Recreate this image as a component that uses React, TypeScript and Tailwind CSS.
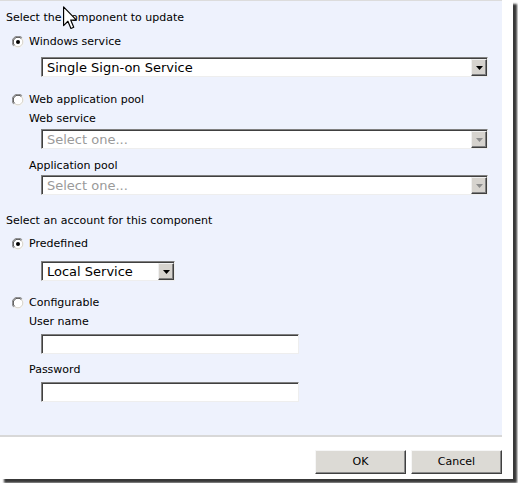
import React from 'react';

const label = "font-['DejaVu_Sans',sans-serif] text-[11px] leading-[14px] text-black";

function Radio({ checked }: { checked?: boolean }) {
  return (
    <svg width="12" height="12" viewBox="0 0 12 12" className="shrink-0">
      <circle cx="6" cy="6" r="5.5" fill="#ffffff" />
      <path d="M1.8 10.2 A5.5 5.5 0 0 1 10.2 1.8" fill="none" stroke="#808080" strokeWidth="1" />
      <path d="M2.6 9.4 A4.5 4.5 0 0 1 9.4 2.6" fill="none" stroke="#404040" strokeWidth="1" />
      <path d="M10.2 1.8 A5.5 5.5 0 0 1 1.8 10.2" fill="none" stroke="#f4f4f4" strokeWidth="1" />
      <path d="M9.4 2.6 A4.5 4.5 0 0 1 2.6 9.4" fill="none" stroke="#d4d0c8" strokeWidth="1" />
      {checked && <circle cx="6" cy="6" r="2" fill="#000000" />}
    </svg>
  );
}

function RadioRow({ text, checked, className }: { text: string; checked?: boolean; className: string }) {
  return (
    <div className={`flex items-center h-[14px] pl-[12px] gap-[5px] ${className}`}>
      <Radio checked={checked} />
      <span className={label}>{text}</span>
    </div>
  );
}

function Dropdown({
  value,
  disabled,
  width,
  className,
}: {
  value: string;
  disabled?: boolean;
  width: string;
  className: string;
}) {
  return (
    <div
      className={`${width} h-[20px] ml-[41px] flex bg-white border border-t-[#808080] border-l-[#808080] border-b-[#eeeeee] border-r-[#eeeeee] shadow-[inset_1px_1px_0_#404040] ${className}`}
    >
      <div
        className={`flex-1 flex items-center pl-[5px] pt-[1px] font-['DejaVu_Sans',sans-serif] text-[13px] leading-none ${
          disabled ? 'text-[#9a9a9a]' : 'text-black'
        }`}
      >
        {value}
      </div>
      <div className="w-[16px] h-[17px] mt-[1px] flex items-center justify-center bg-[#d6d3ce] border border-t-[#f0f0f0] border-l-[#f0f0f0] border-b-[#404040] border-r-[#404040] shadow-[inset_-1px_-1px_0_#808080]">
        <svg width="7" height="4" viewBox="0 0 7 4">
          <path d="M0 0 H7 L3.5 4 Z" fill={disabled ? '#8c8c8c' : '#000000'} />
        </svg>
      </div>
    </div>
  );
}

function TextBox({ className }: { className: string }) {
  return (
    <div
      className={`w-[258px] h-[20px] ml-[41px] bg-white border border-t-[#808080] border-l-[#808080] border-b-[#eeeeee] border-r-[#eeeeee] shadow-[inset_1px_1px_0_#404040] ${className}`}
    />
  );
}

function Button({ children }: { children: React.ReactNode }) {
  return (
    <button
      type="button"
      className="w-[91px] h-[24px] bg-[#dcdad5] border border-t-[#f6f6f6] border-l-[#f6f6f6] border-b-[#404040] border-r-[#404040] shadow-[inset_-1px_-1px_0_#8a8a8a] font-['DejaVu_Sans',sans-serif] text-[11px] text-black"
    >
      {children}
    </button>
  );
}

export default function App() {
  return (
    <div className="w-[518px] h-[483px] bg-white overflow-hidden relative">
      <div className="w-[513px] h-[479px] bg-white shadow-[4px_4px_2px_rgba(0,0,0,0.78)] flex flex-col">
        <div className="w-[502px] h-[435px] bg-[#eef2fd] border-t border-[#dcdcdc] flex flex-col">
          <div className={`${label} pl-[6px] mt-[10px]`}>Select the component to update</div>
          <RadioRow text="Windows service" checked className="mt-[10px]" />
          <Dropdown value="Single Sign-on Service" width="w-[447px]" className="mt-[8px]" />
          <RadioRow text="Web application pool" className="mt-[16px]" />
          <div className={`${label} pl-[29px] mt-[5px]`}>Web service</div>
          <Dropdown value="Select one..." disabled width="w-[447px]" className="mt-[3px]" />
          <div className={`${label} pl-[29px] mt-[10px]`}>Application pool</div>
          <Dropdown value="Select one..." disabled width="w-[447px]" className="mt-[2px]" />
          <div className={`${label} pl-[6px] mt-[19px]`}>Select an account for this component</div>
          <RadioRow text="Predefined" checked className="mt-[9px]" />
          <Dropdown value="Local Service" width="w-[134px]" className="mt-[10px]" />
          <RadioRow text="Configurable" className="mt-[15px]" />
          <div className={`${label} pl-[29px] mt-[5px]`}>User name</div>
          <TextBox className="mt-[5px]" />
          <div className={`${label} pl-[29px] mt-[9px]`}>Password</div>
          <TextBox className="mt-[5px]" />
        </div>
        <div className="w-[502px] h-[2px] bg-[#d8d8d8]" />
        <div className="flex justify-end gap-[5px] pr-[11px] pt-[13px]">
          <Button>OK</Button>
          <Button>Cancel</Button>
        </div>
      </div>

      {/* mouse pointer */}
      <svg
        width="14"
        height="24"
        viewBox="0 0 12 20"
        className="absolute left-[63px] top-[6px]"
      >
        <path
          d="M0.5 0.5 L0.5 16.5 L4.2 12.8 L6.8 19 L9.2 18 L6.6 11.8 L11.5 11.8 Z"
          fill="#ffffff"
          stroke="#000000"
          strokeWidth="1"
          strokeLinejoin="round"
        />
      </svg>
    </div>
  );
}
